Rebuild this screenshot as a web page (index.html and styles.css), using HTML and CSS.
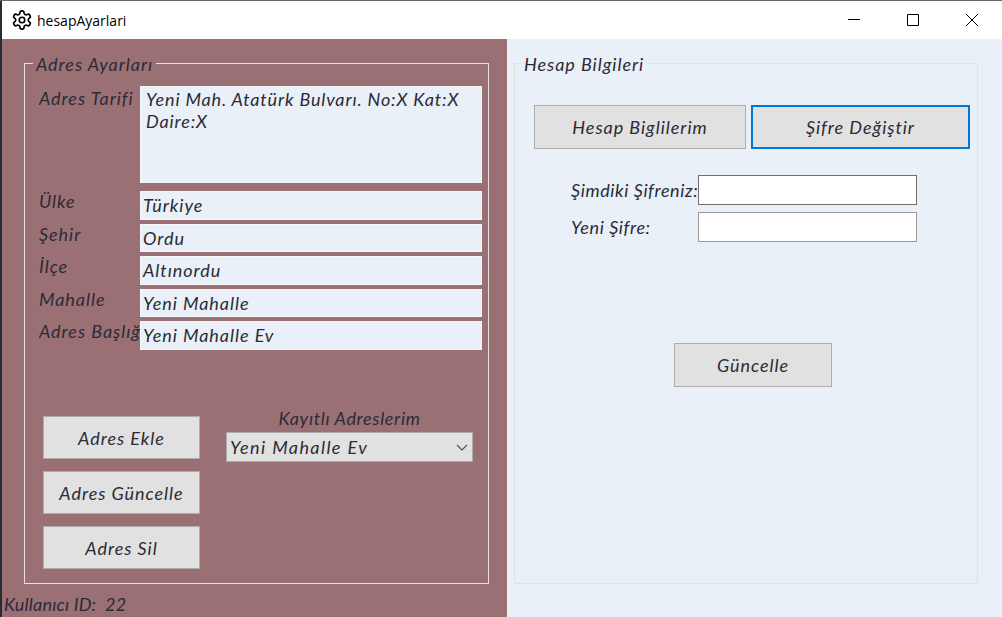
FILE: index.html
```html
<!DOCTYPE html>
<html lang="tr">
<head>
  <meta charset="UTF-8">
  <meta name="viewport" content="width=device-width, initial-scale=1">
  <title>hesapAyarlari</title>
  <link rel="stylesheet" href="styles.css">
</head>
<body>
<header class="titlebar">
  <svg class="app-icon" viewBox="0 0 24 24" width="22" height="22" fill="none" stroke="#000" stroke-width="1.8" stroke-linejoin="round">
    <path d="M12.22 2h-.44a2 2 0 0 0-2 2v.18a2 2 0 0 1-1 1.73l-.43.25a2 2 0 0 1-2 0l-.15-.08a2 2 0 0 0-2.73.73l-.22.38a2 2 0 0 0 .73 2.73l.15.1a2 2 0 0 1 1 1.72v.51a2 2 0 0 1-1 1.74l-.15.09a2 2 0 0 0-.73 2.73l.22.38a2 2 0 0 0 2.73.73l.15-.08a2 2 0 0 1 2 0l.43.25a2 2 0 0 1 1 1.73V20a2 2 0 0 0 2 2h.44a2 2 0 0 0 2-2v-.18a2 2 0 0 1 1-1.73l.43-.25a2 2 0 0 1 2 0l.15.08a2 2 0 0 0 2.73-.73l.22-.39a2 2 0 0 0-.73-2.73l-.15-.08a2 2 0 0 1-1-1.74v-.5a2 2 0 0 1 1-1.74l.15-.09a2 2 0 0 0 .73-2.73l-.22-.38a2 2 0 0 0-2.73-.73l-.15.08a2 2 0 0 1-2 0l-.43-.25a2 2 0 0 1-1-1.73V4a2 2 0 0 0-2-2z"/>
    <circle cx="12" cy="12" r="3"/>
  </svg>
  <span class="app-title">hesapAyarlari</span>
  <div class="win-controls">
    <span class="win-btn"><svg viewBox="0 0 12 12" width="12" height="12"><path d="M0 5.5h12" stroke="#000"/></svg></span>
    <span class="win-btn"><svg viewBox="0 0 12 12" width="12" height="12"><path d="M.5.5h11v11H.5z" fill="none" stroke="#000"/></svg></span>
    <span class="win-btn"><svg viewBox="0 0 12 12" width="12" height="12"><path d="M0 0l12 12M12 0L0 12" stroke="#000"/></svg></span>
  </div>
</header>

<main class="content">
  <section class="panel-left">
    <fieldset class="group group-light">
      <legend>Adres Ayarları</legend>
      <div class="address-grid">
        <label class="lbl lbl-first">Adres Tarifi</label>
        <div class="field field-area">Yeni Mah. Atatürk Bulvarı. No:X Kat:X Daire:X</div>
        <label class="lbl">Ülke</label>
        <div class="field">Türkiye</div>
        <label class="lbl">Şehir</label>
        <div class="field">Ordu</div>
        <label class="lbl">İlçe</label>
        <div class="field">Altınordu</div>
        <label class="lbl">Mahalle</label>
        <div class="field">Yeni Mahalle</div>
        <label class="lbl">Adres Başlığı</label>
        <div class="field">Yeni Mahalle Ev</div>
      </div>
      <div class="address-actions">
        <div class="action-col">
          <button class="btn">Adres Ekle</button>
          <button class="btn">Adres Güncelle</button>
          <button class="btn">Adres Sil</button>
        </div>
        <div class="combo-col">
          <div class="combo-title">Kayıtlı Adreslerim</div>
          <div class="combo">
            <span>Yeni Mahalle Ev</span>
            <svg viewBox="0 0 12 7" width="12" height="7" fill="none" stroke="#555" stroke-width="1.2"><path d="M1 1l5 5 5-5"/></svg>
          </div>
        </div>
      </div>
    </fieldset>
    <div class="user-id">Kullanıcı ID:&nbsp; 22</div>
  </section>

  <section class="panel-right">
    <fieldset class="group group-plain">
      <legend>Hesap Bilgileri</legend>
      <div class="tabs">
        <button class="btn tab">Hesap Biglilerim</button>
        <button class="btn tab tab-active">Şifre Değiştir</button>
      </div>
      <div class="pass-form">
        <label class="pass-lbl">Şimdiki Şifreniz:</label>
        <input class="pass-input pass-focus" type="password">
        <label class="pass-lbl">Yeni Şifre:</label>
        <input class="pass-input" type="password">
      </div>
      <button class="btn btn-save">Güncelle</button>
    </fieldset>
  </section>
</main>
</body>
</html>
```

FILE: styles.css
```css
:root {
  --rose: #9b7075;
  --ice: #e9f0f7;
  --btn-bg: #e1e1e1;
  --text: #2b2b35;
  --accent: #0078d7;
}
* { box-sizing: border-box; margin: 0; padding: 0; }
html, body { height: 100%; overflow: hidden; }
body {
  display: flex;
  flex-direction: column;
  background: #2b2b38;
  padding-left: 2px;
  border-top: 1px solid #6a6a6a;
  font-family: "Lato", "Open Sans", sans-serif;
  font-style: italic;
  font-size: 18px;
  letter-spacing: 0.95px;
  color: var(--text);
}

/* title bar */
.titlebar {
  height: 38px;
  flex: none;
  background: #fff;
  display: flex;
  align-items: center;
  padding-left: 9px;
}
.app-icon { flex: none; margin-top: -1px; }
.app-title {
  margin-left: 4px;
  font-family: "Open Sans", sans-serif;
  font-style: normal;
  font-size: 14px;
  letter-spacing: 0;
  color: #000;
}
.win-controls { margin-left: auto; padding-right: 1px; display: flex; }
.win-btn {
  width: 59px;
  height: 38px;
  display: flex;
  align-items: center;
  justify-content: center;
}

/* layout */
.content { flex: 1; display: flex; min-height: 0; }
.panel-left {
  width: 505px;
  flex: none;
  background: var(--rose);
  padding-top: 14px;
}
.panel-right {
  flex: 1;
  background: var(--ice);
  padding: 14px 24px 0 7px;
}

/* group boxes */
.group {
  height: 531px;
  padding: 0;
  min-width: 0;
}
.group legend {
  margin-left: 8px;
  padding: 2px 3px 0;
  line-height: 18px;
}
.group-light {
  margin-left: 22px;
  width: 465px;
  border: 1.5px solid #e6dfe0;
}
.group-plain { border: 1px solid #dde2e6; }
.group-plain legend { margin-left: 6px; }

/* address form */
.address-grid {
  display: grid;
  grid-template-columns: 101px 342px;
  grid-template-rows: 101px repeat(5, 28.5px);
  row-gap: 4px;
  padding: 13px 0 0 14px;
}
.lbl {
  line-height: 20px;
  white-space: nowrap;
  overflow: hidden;
}
.lbl-first { padding-top: 2px; height: 26px; }
.field {
  background: var(--ice);
  border: 1px solid #f3f6fa;
  line-height: 26px;
  padding: 0 2px;
}
.field-area {
  padding: 1px 5px;
  line-height: 22px;
  margin-bottom: 4px;
  letter-spacing: 0.85px;
}
.address-actions {
  display: flex;
  align-items: flex-start;
  gap: 26px;
  margin: 57.5px 0 0 18px;
}
.action-col {
  display: flex;
  flex-direction: column;
  gap: 12px;
  padding-top: 9px;
}
.btn {
  font: inherit;
  letter-spacing: inherit;
  color: inherit;
  background: var(--btn-bg);
  border: 1.5px solid #adadad;
  width: 157px;
  height: 43px;
}
.combo-col { width: 247px; }
.combo-title {
  text-align: center;
  line-height: 22px;
  margin-bottom: 3px;
  letter-spacing: 0.65px;
}
.combo {
  height: 30px;
  background: var(--btn-bg);
  border: 1.5px solid #adadad;
  display: flex;
  align-items: center;
  justify-content: space-between;
  padding: 0 4px 0 3px;
  letter-spacing: 1.4px;
}
.user-id {
  margin: 9px 0 0 2px;
  line-height: 22px;
  letter-spacing: 0.2px;
}

/* account form */
.tabs {
  display: flex;
  gap: 5px;
  padding: 32px 0 0 19px;
}
.tab { width: 212px; height: 44px; }
.tab-active { width: 219px; border: 2px solid var(--accent); }
.pass-form {
  display: grid;
  grid-template-columns: 127px 219px;
  grid-template-rows: 30px 30px;
  row-gap: 7px;
  align-items: center;
  margin: 26px 0 0 56px;
}
.pass-lbl { white-space: nowrap; letter-spacing: 0.6px; }
.pass-input {
  height: 30px;
  background: #fff;
  border: 1.5px solid #9a9a9a;
  outline: none;
}
.pass-focus { border-color: #6f6f6f; }
.btn-save {
  display: block;
  width: 158px;
  height: 44px;
  margin: 101px 0 0 159px;
}
```
